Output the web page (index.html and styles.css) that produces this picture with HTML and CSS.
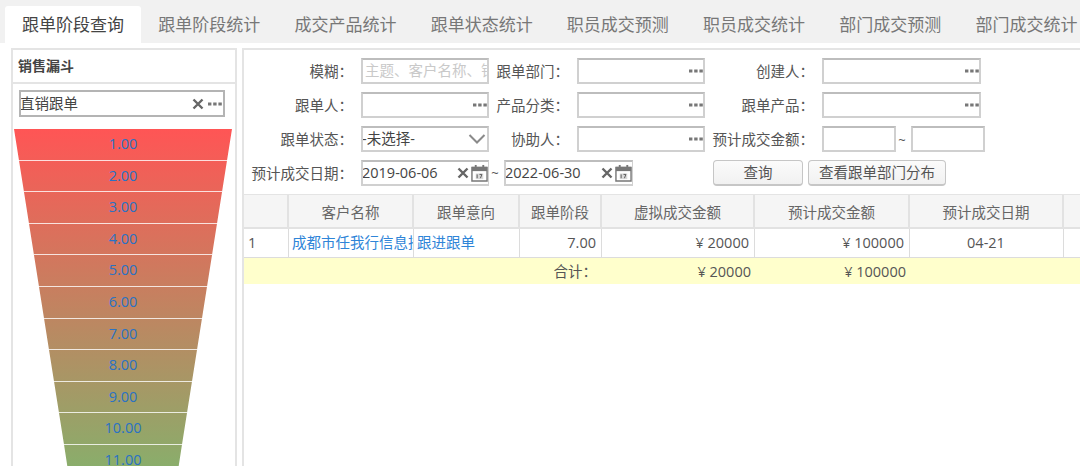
FILE: index.html
```html
<!DOCTYPE html>
<html lang="zh">
<head>
<meta charset="utf-8">
<title>跟单阶段查询</title>
<link rel="stylesheet" href="styles.css">
</head>
<body>
<svg class="defs" width="0" height="0" aria-hidden="true">
  <symbol id="dots" viewBox="0 0 14 4"><rect x="0" y="0.5" width="3.4" height="3" fill="#777"/><rect x="5.2" y="0.5" width="3.4" height="3" fill="#777"/><rect x="10.4" y="0.5" width="3.4" height="3" fill="#777"/></symbol>
  <symbol id="cross" viewBox="0 0 12 12"><path d="M1.5 1.5 10.5 10.5M10.5 1.5 1.5 10.5" stroke="#666" stroke-width="2.4" fill="none"/></symbol>
  <symbol id="cal" viewBox="0 0 18 18"><path d="M1 3h16v14.500H1z" fill="#fff" stroke="#777" stroke-width="1.500"/><rect x="1" y="2.500" width="16" height="4.500" fill="#777"/><rect x="4" y="0.500" width="2" height="3" fill="#777"/><rect x="12" y="0.500" width="2" height="3" fill="#777"/><rect x="5" y="9.500" width="8" height="6" fill="#d9d9d9"/><path d="M6.500 10.500v4M9 10.500h2.500L10 14.500" stroke="#555" stroke-width="1" fill="none"/></symbol>
</svg>

<nav class="tabs">
  <a class="tab active">跟单阶段查询</a>
  <a class="tab">跟单阶段统计</a>
  <a class="tab">成交产品统计</a>
  <a class="tab">跟单状态统计</a>
  <a class="tab">职员成交预测</a>
  <a class="tab">职员成交统计</a>
  <a class="tab">部门成交预测</a>
  <a class="tab">部门成交统计</a>
</nav>

<main class="content">
  <aside class="side">
    <h2 class="side-title">销售漏斗</h2>
    <div class="side-body">
      <div class="field side-field">
        <span class="value">直销跟单</span>
        <svg class="ic-x"><use href="#cross"/></svg>
        <svg class="ic-dots"><use href="#dots"/></svg>
      </div>
      <div class="funnel">
        <div class="step">1.00</div>
        <div class="step">2.00</div>
        <div class="step">3.00</div>
        <div class="step">4.00</div>
        <div class="step">5.00</div>
        <div class="step">6.00</div>
        <div class="step">7.00</div>
        <div class="step">8.00</div>
        <div class="step">9.00</div>
        <div class="step">10.00</div>
        <div class="step">11.00</div>
      </div>
    </div>
  </aside>

  <section class="main">
    <form class="filters">
      <label class="lbl">模糊：</label>
      <div class="field"><span class="value ph">主题、客户名称、销</span></div>
      <label class="lbl">跟单部门：</label>
      <div class="field end"><svg class="ic-dots"><use href="#dots"/></svg></div>
      <label class="lbl">创建人：</label>
      <div class="field end"><svg class="ic-dots"><use href="#dots"/></svg></div>

      <label class="lbl">跟单人：</label>
      <div class="field end"><svg class="ic-dots"><use href="#dots"/></svg></div>
      <label class="lbl">产品分类：</label>
      <div class="field end"><svg class="ic-dots"><use href="#dots"/></svg></div>
      <label class="lbl">跟单产品：</label>
      <div class="field end"><svg class="ic-dots"><use href="#dots"/></svg></div>

      <label class="lbl">跟单状态：</label>
      <div class="field">
        <span class="value">-未选择-</span>
        <svg class="ic-chev" viewBox="0 0 18 10"><path d="M1.500 1 9 8.500 16.500 1" stroke="#8a8a8a" stroke-width="2" fill="none"/></svg>
      </div>
      <label class="lbl">协助人：</label>
      <div class="field end"><svg class="ic-dots"><use href="#dots"/></svg></div>
      <label class="lbl">预计成交金额：</label>
      <div class="range">
        <div class="field small"></div>
        <span class="tilde amount">~</span>
        <div class="field small"></div>
      </div>

      <label class="lbl">预计成交日期：</label>
      <div class="last-row">
        <div class="field date">
          <span class="value">2019-06-06</span>
          <svg class="ic-x"><use href="#cross"/></svg>
          <svg class="ic-cal"><use href="#cal"/></svg>
        </div>
        <span class="tilde">~</span>
        <div class="field date">
          <span class="value">2022-06-30</span>
          <svg class="ic-x"><use href="#cross"/></svg>
          <svg class="ic-cal"><use href="#cal"/></svg>
        </div>
        <button type="button" class="btn btn-query">查询</button>
        <button type="button" class="btn btn-dist">查看跟单部门分布</button>
      </div>
    </form>

    <table class="grid">
      <colgroup>
        <col class="c0"><col class="c1"><col class="c2"><col class="c3"><col class="c4"><col class="c5"><col class="c6"><col class="c7">
      </colgroup>
      <thead>
        <tr><th></th><th>客户名称</th><th>跟单意向</th><th>跟单阶段</th><th>虚拟成交金额</th><th>预计成交金额</th><th>预计成交日期</th><th></th></tr>
      </thead>
      <tbody>
        <tr>
          <td>1</td>
          <td class="link"><span class="clip">成都市任我行信息技</span></td>
          <td class="link">跟进跟单</td>
          <td class="num">7.00</td>
          <td class="num">¥ 20000</td>
          <td class="num">¥ 100000</td>
          <td class="mid">04-21</td>
          <td></td>
        </tr>
      </tbody>
      <tfoot>
        <tr>
          <td colspan="4" class="num sum">合计：</td>
          <td class="num">¥ 20000</td>
          <td class="num">¥ 100000</td>
          <td colspan="2"></td>
        </tr>
      </tfoot>
    </table>
  </section>
</main>
</body>
</html>
```
FILE: styles.css
```css
* { box-sizing: border-box; }
html, body { margin: 0; height: 466px; overflow: hidden; }
body {
  background: #fff;
  color: #555;
  font: 14.5px/20px "Open Sans", "Noto Sans CJK SC", sans-serif;
  display: flex;
  flex-direction: column;
}
.defs { position: absolute; }

.tabs {
  display: flex;
  flex: none;
  height: 43px;
  padding: 6px 0 0 5px;
  background: #f1f1f1;
  overflow: hidden;
}
.tab {
  flex: none;
  width: 136.2px;
  text-align: center;
  font-size: 17px;
  line-height: 37px;
  color: #777;
  white-space: nowrap;
}
.tab.active { background: #fff; color: #444; border-radius: 3px 3px 0 0; }

.content {
  flex: 1;
  min-height: 0;
  display: flex;
  gap: 5px;
  padding: 5px 0 0 11px;
  background: #fff;
  overflow: hidden;
}

.side {
  flex: none;
  width: 226px;
  height: 440px;
  border: 2px solid #e4e4e4;
  border-bottom: 0;
  display: flex;
  flex-direction: column;
}
.side-title {
  margin: 0;
  flex: none;
  height: 34px;
  padding-left: 5px;
  font-size: 14px;
  font-weight: 700;
  line-height: 32px;
  color: #444;
  border-bottom: 2px solid #e4e4e4;
}
.side-body { padding: 6px 0 0 1px; }

.field {
  display: flex;
  align-items: center;
  height: 26px;
  min-width: 0;
  border: 2px solid #d0d0d0;
  border-top-color: #bdbdbd;
  background: #fff;
  overflow: hidden;
}
.field.end { justify-content: flex-end; }
.value {
  flex: 1;
  min-width: 0;
  margin-left: -1px;
  white-space: nowrap;
  overflow: hidden;
  color: #444;
  line-height: 20px;
}
.value.ph { color: #c9c9c9; margin-left: 2px; }

.side-field {
  width: 206px;
  height: 27px;
  margin-left: 5px;
  border-color: #b4b4b4;
  padding-right: 1px;
}
.ic-x { flex: none; width: 12px; height: 12px; }
.ic-dots { flex: none; width: 14px; height: 4px; }
.side-field .ic-x { margin-right: 4px; }
.ic-chev { flex: none; width: 18px; height: 10px; margin-right: 1px; }
.ic-cal { flex: none; width: 17px; height: 18px; }

.funnel {
  width: 218px;
  height: 348px;
  margin-top: 12px;
  clip-path: polygon(0 0, 218px 0, 168px 315.500px, 163px 348px, 55px 348px, 50px 315.500px);
  background: linear-gradient(#ff5555 0, #8aad6b 337px);
}
.step {
  height: 31.600px;
  padding-top: 4px;
  border-bottom: 1px solid rgba(255, 255, 255, .8);
  text-align: center;
  font-size: 14.5px;
  line-height: 22px;
  color: #2a72c4;
}

.main {
  flex: 1;
  min-width: 0;
  height: 423px;
  border-left: 2px solid #e4e4e4;
  border-top: 2px solid #e4e4e4;
  overflow: hidden;
}
.filters {
  display: grid;
  grid-template-columns: 117px 128px 88px 128px 117px 159px;
  grid-auto-rows: 26px;
  row-gap: 8px;
  padding-top: 8px;
  height: 144px;
}
.lbl {
  text-align: right;
  padding-right: 8px;
  line-height: 28px;
  white-space: nowrap;
}
.range { display: flex; width: 163px; }
.small { flex: none; width: 74px; }
.tilde { flex: none; width: 15px; padding-right: 3px; text-align: center; line-height: 28px; font-size: 13px; }
.last-row { grid-column: 2 / -1; display: flex; align-items: center; }
.date { flex: none; width: 128px; border-right-width: 1px; }
.date .ic-x { margin-right: 2px; }
.date + .tilde + .date { width: 129px; }
.btn {
  flex: none;
  height: 26px;
  padding: 0;
  font: inherit;
  color: #555;
  background: linear-gradient(#fbfbfb, #f1f1f1);
  border: 1px solid #c6c6c6;
  border-bottom-width: 2px;
  border-radius: 4px;
  line-height: 20px;
}
.btn-query { width: 90px; margin-left: 80px; }
.btn-dist { width: 138px; margin-left: 5px; }

.grid {
  table-layout: fixed;
  width: 838px;
  border-collapse: separate;
  border-spacing: 0;
  border-top: 1px solid #e4e4e4;
}
.c0 { width: 45px; }
.c1 { width: 125px; }
.c2 { width: 106px; }
.c3 { width: 82px; }
.c4 { width: 153px; }
.c5 { width: 155px; }
.c6 { width: 154px; }
.c7 { width: 18px; }
th {
  height: 34px;
  padding: 3px 0 0;
  font-weight: 400;
  color: #666;
  background: #f5f5f5;
  border-right: 2px solid #e2e2e2;
  border-bottom: 2px solid #e2e2e2;
  text-align: center;
}
tbody td {
  height: 29px;
  padding: 0 5px 0 4px;
  border-right: 1px solid #dcdcdc;
  border-bottom: 1px solid #dcdcdc;
  white-space: nowrap;
  overflow: hidden;
}
tfoot td {
  height: 26px;
  padding: 2px 4px 0;
  background: #ffffcc;
  white-space: nowrap;
}
tfoot .sum { padding-right: 5px; }
.link { color: #2f85d8; }
tbody .link { padding: 0 0 0 3px; }
.clip { display: block; overflow: hidden; }
.num { text-align: right; }
.mid { text-align: center; }
```
